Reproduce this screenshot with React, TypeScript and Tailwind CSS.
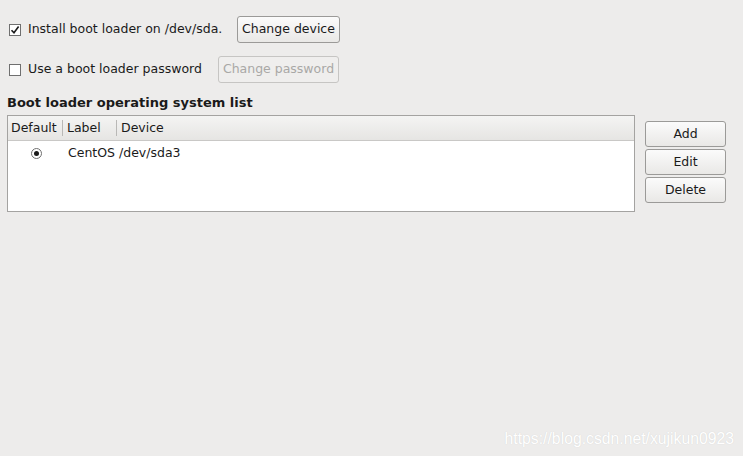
import React from "react";

function CheckBox({ checked }: { checked?: boolean }) {
  return (
    <span className="w-[12px] h-[12px] border border-[#6f6f6f] bg-white flex items-center justify-center shrink-0">
      {checked && (
        <svg width="10" height="10" viewBox="0 0 10 10">
          <path d="M1.5 5.2 L4 7.8 L8.6 1.6" fill="none" stroke="#1a1a1a" strokeWidth="1.6" />
        </svg>
      )}
    </span>
  );
}

function Button({ label, disabled, className = "" }: { label: string; disabled?: boolean; className?: string }) {
  return (
    <button
      className={`px-0 whitespace-nowrap rounded-[3px] border text-[12.5px] leading-none ${
        disabled
          ? "border-[#c6c5c3] bg-[#efeeed] text-[#a9a8a6]"
          : "border-[#9b9a98] bg-gradient-to-b from-[#fbfbfb] to-[#e9e8e6] text-[#1a1a1a]"
      } ${className}`}
    >
      {label}
    </button>
  );
}

export default function App() {
  return (
    <div className="relative w-[743px] h-[456px] overflow-hidden bg-[#edeceb] text-[#1a1a1a] text-[12.5px] font-['DejaVu_Sans',sans-serif]">
      <div className="pt-[16px] pl-[9px] flex flex-col">
        {/* Install boot loader */}
        <div className="flex items-center h-[27px]">
          <CheckBox checked />
          <span className="ml-[7px] w-[209px]">Install boot loader on /dev/sda.</span>
          <Button label="Change device" className="w-[103px] h-[27px]" />
        </div>

        {/* Password */}
        <div className="flex items-center h-[27px] mt-[13px]">
          <CheckBox />
          <span className="ml-[7px] w-[190px]">Use a boot loader password</span>
          <Button label="Change password" disabled className="w-[121px] h-[27px]" />
        </div>
      </div>

      <h4 className="mt-[12px] ml-[7px] font-bold text-[13px] leading-[15px]">Boot loader operating system list</h4>

      <div className="flex ml-[7px] mt-[5px] items-start">
        {/* OS list */}
        <div className="w-[628px] h-[97px] border border-[#a4a3a1] bg-white flex flex-col">
          <div className="h-[25px] flex items-center border-b border-[#c9c8c6] bg-gradient-to-b from-[#f4f4f3] to-[#e6e5e3]">
            <span className="w-[54px] pl-[3px]">Default</span>
            <span className="w-px h-[16px] bg-[#b9b8b6]" />
            <span className="w-[53px] pl-[4px]">Label</span>
            <span className="w-px h-[16px] bg-[#b9b8b6]" />
            <span className="pl-[4px]">Device</span>
          </div>
          <div className="h-[24px] flex items-center">
            <span className="w-[23px]" />
            <span className="w-[11px] h-[11px] rounded-full border border-[#6f6f6f] bg-white flex items-center justify-center">
              <span className="w-[5px] h-[5px] rounded-full bg-[#1a1a1a]" />
            </span>
            <span className="ml-[26px] w-[51px]">CentOS</span>
            <span>/dev/sda3</span>
          </div>
        </div>

        {/* Actions */}
        <div className="ml-[10px] mt-[6px] flex flex-col gap-[2px]">
          <Button label="Add" className="w-[81px] h-[26px]" />
          <Button label="Edit" className="w-[81px] h-[26px]" />
          <Button label="Delete" className="w-[81px] h-[26px]" />
        </div>
      </div>

      <div className="absolute right-[9px] top-[427px] text-[15.75px] text-white font-['Liberation_Sans',sans-serif] [text-shadow:0_0_1px_#cdcdcd]">
        https://blog.csdn.net/xujikun0923
      </div>
    </div>
  );
}
